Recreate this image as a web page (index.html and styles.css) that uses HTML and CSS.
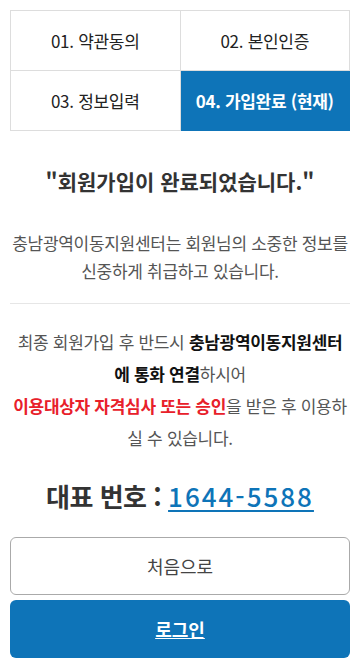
FILE: index.html
```html
<!DOCTYPE html>
<html lang="ko">
<head>
    <meta charset="UTF-8">
    <meta name="viewport" content="width=device-width, initial-scale=1.0">
    <title>회원가입 완료</title>
    <link rel="stylesheet" href="styles.css">
</head>
<body>
    <div class="wrap">
        <ul class="steps">
            <li>01. 약관동의</li>
            <li>02. 본인인증</li>
            <li>03. 정보입력</li>
            <li class="on">04. 가입완료 (현재)</li>
        </ul>

        <h2 class="done-title">"회원가입이 완료되었습니다."</h2>
        <p class="done-desc">충남광역이동지원센터는 회원님의 소중한 정보를<br>신중하게 취급하고 있습니다.</p>

        <p class="notice">
            최종 회원가입 후 반드시 <strong>충남광역이동지원센터<br>에 통화 연결</strong>하시어<br>
            <strong class="red">이용대상자 자격심사 또는 승인</strong>을 받은 후 이용하<br>실 수 있습니다.
        </p>

        <p class="tel">대표 번호 : <a href="#">1644-5588</a></p>

        <div class="btns">
            <a href="#" class="btn btn-line">처음으로</a>
            <a href="#" class="btn btn-blue">로그인</a>
        </div>
    </div>
</body>
</html>
```

FILE: styles.css
```css
body {
    margin: 0;
    padding: 0;
    font-family: "Noto Sans CJK KR", "Noto Sans", sans-serif;
    background: #fff;
    color: #333;
}

.wrap {
    padding: 10px;
}

.steps {
    list-style: none;
    margin: 0;
    padding: 0;
    display: grid;
    grid-template-columns: 1fr 1fr;
    border-top: 1px solid #ddd;
    border-left: 1px solid #ddd;
}

.steps li {
    height: 59px;
    display: flex;
    align-items: center;
    justify-content: center;
    font-size: 17px;
    color: #222;
    letter-spacing: -0.3px;
    border-right: 1px solid #ddd;
    border-bottom: 1px solid #ddd;
}

.steps li.on {
    background: #0e74b8;
    color: #fff;
    font-weight: bold;
    border-color: #0e74b8;
}

.done-title {
    margin: 35px 0 0;
    font-size: 21px;
    font-weight: bold;
    text-align: center;
    color: #333;
    line-height: 30px;
}

.done-desc {
    margin: 33px 0 0;
    padding-bottom: 18px;
    font-size: 17px;
    line-height: 28px;
    text-align: center;
    color: #555;
    letter-spacing: -0.3px;
    border-bottom: 1px solid #e6e6e6;
}

.notice {
    margin: 22px 0 0;
    font-size: 17px;
    line-height: 32px;
    text-align: center;
    color: #555;
    letter-spacing: -0.3px;
}

.notice strong {
    color: #111;
}

.notice strong.red {
    color: #e8202a;
}

.tel {
    margin: 24px 0 0;
    font-size: 26px;
    line-height: 36px;
    font-weight: bold;
    text-align: center;
    color: #333;
    letter-spacing: -0.5px;
}

.tel a {
    color: #0e74b8;
    font-weight: 500;
    letter-spacing: 2px;
    text-decoration: underline;
    text-decoration-thickness: 2px;
    text-underline-offset: 3px;
}

.btns {
    margin-top: 23px;
    display: flex;
    flex-direction: column;
    gap: 5px;
}

.btn {
    display: flex;
    align-items: center;
    justify-content: center;
    height: 58px;
    box-sizing: border-box;
    border-radius: 6px;
    font-size: 18px;
    text-decoration: none;
}

.btn-line {
    border: 1px solid #aaa;
    color: #444;
}

.btn-blue {
    background: #0e74b8;
    color: #fff;
    font-weight: bold;
    text-decoration: underline;
}
```
